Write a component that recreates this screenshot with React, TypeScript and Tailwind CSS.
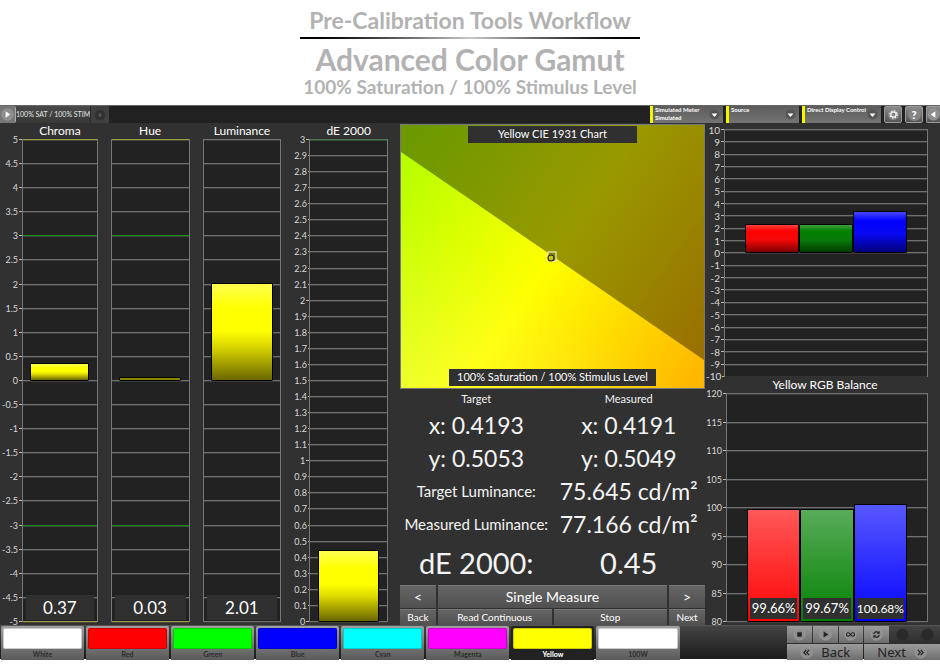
import React from "react";

type Mark = { at: number; tone: string };
type Bar = { from: number; to: number; tone: string; value?: string; small?: boolean };

const YELLOW = "bg-[linear-gradient(#ffff50,#ffff00_25%,#ffff00_48%,#dcd800_65%,#6a6600)]";

function steps(top: number, bottom: number, step: number): number[] {
  const count = Math.round((top - bottom) / step);
  return Array.from({ length: count + 1 }, (_, i) => Math.round((top - i * step) * 10) / 10);
}

function Axis({ values, large }: { values: number[]; large?: boolean }) {
  return (
    <div className="flex h-full flex-col justify-between">
      {values.map((v) => (
        <div key={v} className="flex h-px items-center justify-end gap-px">
          <span className={`${large ? "text-[10px]" : "text-[9px]"} leading-none text-[#d8d8d8]`}>{v}</span>
          <span className="h-px w-[3px] bg-[#b8b8b8]" />
        </div>
      ))}
    </div>
  );
}

function Plot({
  values,
  bars,
  marks = [],
  openBottom,
  footer,
}: {
  values: number[];
  bars: Bar[];
  marks?: Mark[];
  openBottom?: boolean;
  footer?: string;
}) {
  const top = values[0];
  const bottom = values[values.length - 1];
  const pct = (v: number) => ((v - bottom) / (top - bottom)) * 100;
  return (
    <div className="relative h-full border-x border-[#777] bg-[#222]">
      <div className="flex h-full flex-col justify-between">
        {values.map((v, i) => {
          const mark = marks.find((m) => m.at === v);
          const plain = openBottom && i === values.length - 1 ? "bg-[#333]" : "bg-[#707070] shadow-[0_1px_0_#3c3c3c]";
          return <div key={v} className={`h-px shrink-0 ${mark ? mark.tone : plain}`} />;
        })}
      </div>
      <div className="absolute inset-x-[10%] inset-y-0 flex">
        {bars.map((b, i) => (
          <div key={i} className="relative flex-1">
            <div
              className={`absolute inset-x-0 flex min-h-1 flex-col justify-end rounded-[1px] border border-black ${b.tone}`}
              style={{ bottom: `${pct(b.from)}%`, height: `${pct(b.to) - pct(b.from)}%` }}
            >
              {b.value && (
                <div
                  className={`mx-[2px] mb-[2px] flex h-[21px] items-center justify-center bg-[#303030] text-white ${b.small ? "text-[12px]" : "text-[13px]"}`}
                >
                  {b.value}
                </div>
              )}
            </div>
          </div>
        ))}
      </div>
      {footer && (
        <div className="absolute inset-x-[3px] bottom-[2px] flex h-[25px] items-center justify-center bg-[#303030] text-[17px] text-white">
          {footer}
        </div>
      )}
    </div>
  );
}

function Titled({ title, children }: { title: string; children: React.ReactNode }) {
  return (
    <div className="flex h-full flex-col">
      <h3 className="flex h-4 items-center justify-center text-[12px] whitespace-nowrap text-white">{title}</h3>
      <div className="min-h-0 flex-1">{children}</div>
    </div>
  );
}

const delta = steps(5, -5, 0.5);
const deltaE = steps(3, 0, 0.1);
const rgbDelta = steps(10, -10, 1);
const balance = steps(120, 80, 5);

const EDGE = "bg-[#9a9848] shadow-[0_1px_0_#4a4a30]";
const LIMIT = "bg-[#1f8a1f] shadow-[0_1px_0_#3a4a3a]";

const limits: Mark[] = [
  { at: 5, tone: EDGE },
  { at: 3, tone: LIMIT },
  { at: -3, tone: LIMIT },
  { at: -5, tone: EDGE },
];

const swatches = [
  { name: "White", color: "bg-white" },
  { name: "Red", color: "bg-[#ff0000]" },
  { name: "Green", color: "bg-[#00ff00]" },
  { name: "Blue", color: "bg-[#0000ff]" },
  { name: "Cyan", color: "bg-[#00ffff]" },
  { name: "Magenta", color: "bg-[#ff00ff]" },
  { name: "Yellow", color: "bg-[#ffff00]", active: true },
  { name: "100W", color: "bg-white" },
];

function RoundIcon({ children, dim }: { children?: React.ReactNode; dim?: boolean }) {
  return (
    <svg viewBox="0 0 14 14" className="size-[13px] shrink-0" aria-hidden="true">
      <circle cx="7" cy="7" r="6" fill={dim ? "#2a2a2a" : "#8d8d8d"} stroke={dim ? "#262626" : "#a5a5a5"} strokeWidth="0.7" />
      {children}
    </svg>
  );
}

function ToolButton({ label, last, children }: { label: string; last?: boolean; children: React.ReactNode }) {
  return (
    <button
      type="button"
      aria-label={label}
      className={`flex h-full items-center justify-center rounded-l-[2px] border-y border-l border-[#9a9a9a] bg-linear-to-b from-[#8a8a8a] to-[#555] ${last ? "w-[14px]" : "w-[18px] rounded-r-[2px] border-r"}`}
    >
      {children}
    </button>
  );
}

function Picker({ id, label, value, wide }: { id: string; label: string; value: string; wide?: boolean }) {
  return (
    <div
      className={`flex h-full items-center border-l-3 border-[#f5f500] bg-linear-to-b from-[#5c5c5c] to-[#747474] pr-[3px] ${wide ? "w-[79px]" : "w-[73px]"}`}
    >
      <div className="flex h-full flex-1 flex-col pl-[2px]">
        <label htmlFor={id} className="text-[6px] leading-[8px] font-bold whitespace-nowrap text-white">
          {label}
        </label>
        <select id={id} defaultValue={value} className="h-2 w-full appearance-none text-[6px] leading-[8px] font-bold text-white">
          <option value={value}>{value}</option>
        </select>
      </div>
      <svg viewBox="0 0 12 12" className="size-[11px] shrink-0" aria-hidden="true">
        <circle cx="6" cy="6" r="5.5" fill="#555" />
        <path d="M2.8 4.8h6.4L6 8.8z" fill="#fff" />
      </svg>
    </div>
  );
}

function CieChart() {
  return (
    <div className="relative h-[265px] border border-[#777]">
      <svg viewBox="0 0 303 263" preserveAspectRatio="none" className="block size-full" role="img" aria-label="Yellow CIE 1931 Chart">
        <defs>
          <linearGradient id="gamut" gradientUnits="userSpaceOnUse" x1="-1" y1="29" x2="304" y2="237">
            <stop offset="0" stopColor="#b4ff00" />
            <stop offset="0.5" stopColor="#ffff00" />
            <stop offset="1" stopColor="#ffb800" />
          </linearGradient>
          <linearGradient id="pale" gradientUnits="userSpaceOnUse" x1="100" y1="140" x2="20" y2="263">
            <stop offset="0" stopColor="#fff" stopOpacity="0" />
            <stop offset="1" stopColor="#fff" stopOpacity="0.16" />
          </linearGradient>
        </defs>
        <rect width="303" height="263" fill="url(#gamut)" />
        <rect width="303" height="263" fill="url(#pale)" />
        <path d="M0 0H303V235L0 27Z" fill="#000" fillOpacity="0.4" />
        <rect x="147" y="127" width="8" height="9" fill="#8a8400" stroke="#f0eccc" strokeWidth="1.2" />
        <circle cx="150" cy="133" r="3" fill="#c8c800" stroke="#222" strokeWidth="1.1" />
      </svg>
      <div className="absolute inset-x-0 top-px flex justify-center">
        <span className="flex h-[17px] w-[169px] items-center justify-center bg-[#303030] text-[11px] text-white">
          Yellow CIE 1931 Chart
        </span>
      </div>
      <div className="absolute inset-x-0 bottom-[2px] flex justify-center">
        <span className="flex h-[17px] w-[207px] items-center justify-center bg-[#303030] text-[11px] whitespace-nowrap text-white">
          100% Saturation / 100% Stimulus Level
        </span>
      </div>
    </div>
  );
}

const action =
  "flex items-center justify-center bg-linear-to-b from-[#666] to-[#505050] text-white shadow-[inset_0_1px_0_#777] whitespace-nowrap";
const control = "flex items-center justify-center bg-linear-to-b from-[#9c9c9c] to-[#6e6e6e]";

export default function App() {
  return (
    <div className="min-h-screen bg-white font-['Lato','Open_Sans',sans-serif]">
      <header className="flex h-[105px] flex-col items-center pt-2 font-bold text-[#b2b2b2]">
        <p className="text-[23px] leading-6">Pre-Calibration Tools Workflow</p>
        <div className="mt-[5px] h-[2px] w-[340px] bg-linear-to-r from-black via-[#c8c8c8] to-black" />
        <h1 className="mt-[4px] text-[30px] leading-8">Advanced Color Gamut</h1>
        <h2 className="text-[19px] leading-6">100% Saturation / 100% Stimulus Level</h2>
      </header>

      <main className="bg-[#313131]">
        <nav className="flex h-[18px] items-stretch border-t border-[#666] bg-[#212121]">
          <button
            type="button"
            aria-label="Expand"
            className="flex w-4 items-center justify-center rounded-r-[2px] border-r border-[#aaa] bg-[#777]"
          >
            <RoundIcon>
              <path d="M5 3.6v6.8L10 7z" fill="#fff" />
            </RoundIcon>
          </button>
          <button type="button" className="w-[74px] bg-linear-to-b from-[#4a4a4a] to-[#383838] text-[7px] whitespace-nowrap text-[#e4e4e4]">
            100% SAT / 100% STIM
          </button>
          <button type="button" aria-label="Add page" className="flex w-[19px] items-center justify-center border-l border-[#2a2a2a] bg-[#404040]">
            <svg viewBox="0 0 14 14" className="size-3" aria-hidden="true">
              <circle cx="7" cy="7" r="6" fill="#303030" />
              <path d="M7 5v4M5 7h4" stroke="#666" strokeWidth="1.2" />
            </svg>
          </button>
          <div className="flex-1" />
          <div className="flex gap-[3px]">
            <Picker id="meter" label="Simulated Meter" value="Simulated" />
            <Picker id="source" label="Source" value="" />
            <Picker id="display" label="Direct Display Control" value="" wide />
            <ToolButton label="Settings">
              <svg viewBox="0 0 14 14" className="size-[13px]" aria-hidden="true">
                <circle cx="7" cy="7" r="6" fill="#858585" />
                <circle cx="7" cy="7" r="3.9" fill="none" stroke="#fff" strokeWidth="1.3" strokeDasharray="1.6 1.463" />
                <circle cx="7" cy="7" r="2.8" fill="none" stroke="#fff" strokeWidth="1.1" />
              </svg>
            </ToolButton>
            <ToolButton label="Help">
              <span className="flex size-[13px] items-center justify-center rounded-full bg-[#858585] text-[11px] leading-none font-black text-white">
                ?
              </span>
            </ToolButton>
            <ToolButton label="Collapse" last>
              <RoundIcon>
                <path d="M9 3.6v6.8L4 7z" fill="#fff" />
              </RoundIcon>
            </ToolButton>
          </div>
        </nav>

        <div className="grid grid-cols-[400fr_305fr_235fr]">
          <section className="flex pr-3 pb-[3px]">
            <div className="w-[22px] pt-4">
              <Axis values={delta} />
            </div>
            <div className="flex min-w-0 flex-1 gap-[13px]">
              <div className="min-w-0 flex-[76]">
                <Titled title="Chroma">
                  <Plot values={delta} marks={limits} footer="0.37" bars={[{ from: 0, to: 0.37, tone: YELLOW }]} />
                </Titled>
              </div>
              <div className="min-w-0 flex-[79]">
                <Titled title="Hue">
                  <Plot values={delta} marks={limits} footer="0.03" bars={[{ from: 0, to: 0.03, tone: "bg-[#8a8600]" }]} />
                </Titled>
              </div>
              <div className="min-w-0 flex-[79]">
                <Titled title="Luminance">
                  <Plot values={delta} footer="2.01" bars={[{ from: 0, to: 2.01, tone: YELLOW }]} />
                </Titled>
              </div>
              <div className="flex min-w-0 flex-[94]">
                <div className="w-[15px] pt-4">
                  <Axis values={deltaE} />
                </div>
                <div className="min-w-0 flex-1">
                  <Titled title="dE 2000">
                    <Plot
                      values={deltaE}
                      marks={[{ at: 3, tone: "bg-[#4a7a4a] shadow-[0_1px_0_#3a4a3a]" }]}
                      bars={[{ from: 0, to: 0.45, tone: YELLOW }]}
                    />
                  </Titled>
                </div>
              </div>
            </div>
          </section>

          <section className="pt-px text-[#f4f4f4]">
            <CieChart />
            <div className="grid h-5 grid-cols-2 place-items-center text-[11px]">
              <span>Target</span>
              <span>Measured</span>
            </div>
            <div className="grid auto-rows-[33px] grid-cols-2 place-items-center text-[23px] whitespace-nowrap">
              <span>x: 0.4193</span>
              <span>x: 0.4191</span>
              <span>y: 0.5053</span>
              <span>y: 0.5049</span>
              <span className="text-[15px]">Target Luminance:</span>
              <span>75.645 cd/m²</span>
              <span className="text-[15px]">Measured Luminance:</span>
              <span>77.166 cd/m²</span>
            </div>
            <div className="grid h-11 grid-cols-2 place-items-center text-[29px]">
              <span>dE 2000:</span>
              <span>0.45</span>
            </div>
            <div className="grid grid-cols-[36fr_114fr_114fr_36fr] grid-rows-[23px_16px] gap-x-[2px] gap-y-px text-[10px]">
              <button type="button" aria-label="Previous" className={`${action} text-[14px]`}>&lt;</button>
              <button type="button" className={`${action} col-span-2 text-[14px]`}>Single Measure</button>
              <button type="button" aria-label="Following" className={`${action} text-[14px]`}>&gt;</button>
              <button type="button" className={action}>Back</button>
              <button type="button" className={action}>Read Continuous</button>
              <button type="button" className={action}>Stop</button>
              <button type="button" className={action}>Next</button>
            </div>
          </section>

          <section className="flex flex-col pt-[6px] pr-3 pb-[3px] pl-px">
            <div className="flex h-[248px]">
              <div className="w-[18px]">
                <Axis values={rgbDelta} large />
              </div>
              <div className="min-w-0 flex-1">
                <Plot
                  values={rgbDelta}
                  openBottom
                  bars={[
                    { from: 0, to: 2.3, tone: "bg-[linear-gradient(#ff4040,#ff0000_22%,#f40808_55%,#7c0000)]" },
                    { from: 0, to: 2.3, tone: "bg-[linear-gradient(#3fa03f,#008000_22%,#0a7a0a_55%,#003c00)]" },
                    { from: 0, to: 3.4, tone: "bg-[linear-gradient(#4848ff,#0000ff_22%,#0808f0_55%,#00007c)]" },
                  ]}
                />
              </div>
            </div>
            <h3 className="flex h-4 items-center justify-center pl-4 text-[12px] text-white">Yellow RGB Balance</h3>
            <div className="flex min-h-0 flex-1">
              <div className="w-5">
                <Axis values={balance} />
              </div>
              <div className="min-w-0 flex-1">
                <Plot
                  values={balance}
                  bars={[
                    { from: 80, to: 99.66, tone: "bg-[linear-gradient(#ff5858,#ff1515_80%,#ff0000)]", value: "99.66%" },
                    { from: 80, to: 99.67, tone: "bg-[linear-gradient(#58ac58,#158a15_80%,#008000)]", value: "99.67%" },
                    { from: 80, to: 100.68, tone: "bg-[linear-gradient(#5858ff,#1515ff_80%,#0000ff)]", value: "100.68%", small: true },
                  ]}
                />
              </div>
            </div>
          </section>
        </div>

        <footer className="flex h-[34px] border-t border-[#555] bg-linear-to-b from-[#444] to-[#1c1c1c]">
          <div className="grid min-w-0 flex-[680] grid-cols-8 gap-x-[2px] px-px">
            {swatches.map((s) => (
              <button
                key={s.name}
                type="button"
                className={`flex min-w-0 flex-col rounded-t-[2px] px-[2px] pt-[2px] text-[7px] leading-[11px] ${
                  s.active
                    ? "bg-[#222] font-black text-white"
                    : "bg-linear-to-b from-[#a0a0a0] to-[#5a5a5a] font-bold text-[#2c2c2c]"
                }`}
              >
                <span className={`h-[21px] w-full rounded-[2px] border border-black/20 ${s.color}`} />
                <span className="w-full text-center">{s.name}</span>
              </button>
            ))}
          </div>
          <div className="flex-[107]" />
          <div className="grid min-w-0 flex-[153] grid-rows-[17px_16px] gap-y-px">
            <div className="grid grid-cols-6 gap-x-px">
              <button type="button" aria-label="Stop reading" className={control}>
                <RoundIcon><path d="M4.6 4.6h4.8v4.8H4.6z" fill="#222" /></RoundIcon>
              </button>
              <button type="button" aria-label="Play" className={control}>
                <RoundIcon><path d="M5 3.8v6.4L10 7z" fill="#222" /></RoundIcon>
              </button>
              <button type="button" aria-label="Loop" className={control}>
                <RoundIcon>
                  <path d="M7 7C6 5.6 5.2 5.2 4.4 5.2a1.8 1.8 0 0 0 0 3.6C5.2 8.8 6 8.4 7 7s1.8-1.8 2.6-1.8a1.8 1.8 0 0 1 0 3.6C8.8 8.8 8 8.4 7 7z" fill="none" stroke="#222" strokeWidth="1.1" />
                </RoundIcon>
              </button>
              <button type="button" aria-label="Refresh" className={control}>
                <RoundIcon>
                  <path d="M4 6.5a3 3 0 0 1 5-1.6M10 7.5a3 3 0 0 1-5 1.6" fill="none" stroke="#222" strokeWidth="1.3" />
                  <path d="M10.4 3v3.2H7.3zM3.6 11V7.8h3.1z" fill="#222" />
                </RoundIcon>
              </button>
              <span className="flex items-center justify-center"><RoundIcon dim /></span>
              <span className="flex items-center justify-center"><RoundIcon dim /></span>
            </div>
            <div className="grid grid-cols-2 gap-x-px font-['Noto_Sans',sans-serif] text-[13px] leading-4 text-[#222]">
              <button type="button" className={`${control} gap-2`}>
                <RoundIcon><path d="M6.8 4.2L4.2 7l2.6 2.8M9.8 4.2L7.2 7l2.6 2.8" fill="none" stroke="#222" strokeWidth="1.2" /></RoundIcon>
                Back
              </button>
              <button type="button" className={`${control} gap-2`}>
                Next
                <RoundIcon><path d="M4.2 4.2L6.8 7 4.2 9.800M7.2 4.2L9.8 7 7.2 9.800" fill="none" stroke="#222" strokeWidth="1.2" /></RoundIcon>
              </button>
            </div>
          </div>
        </footer>
      </main>
    </div>
  );
}
